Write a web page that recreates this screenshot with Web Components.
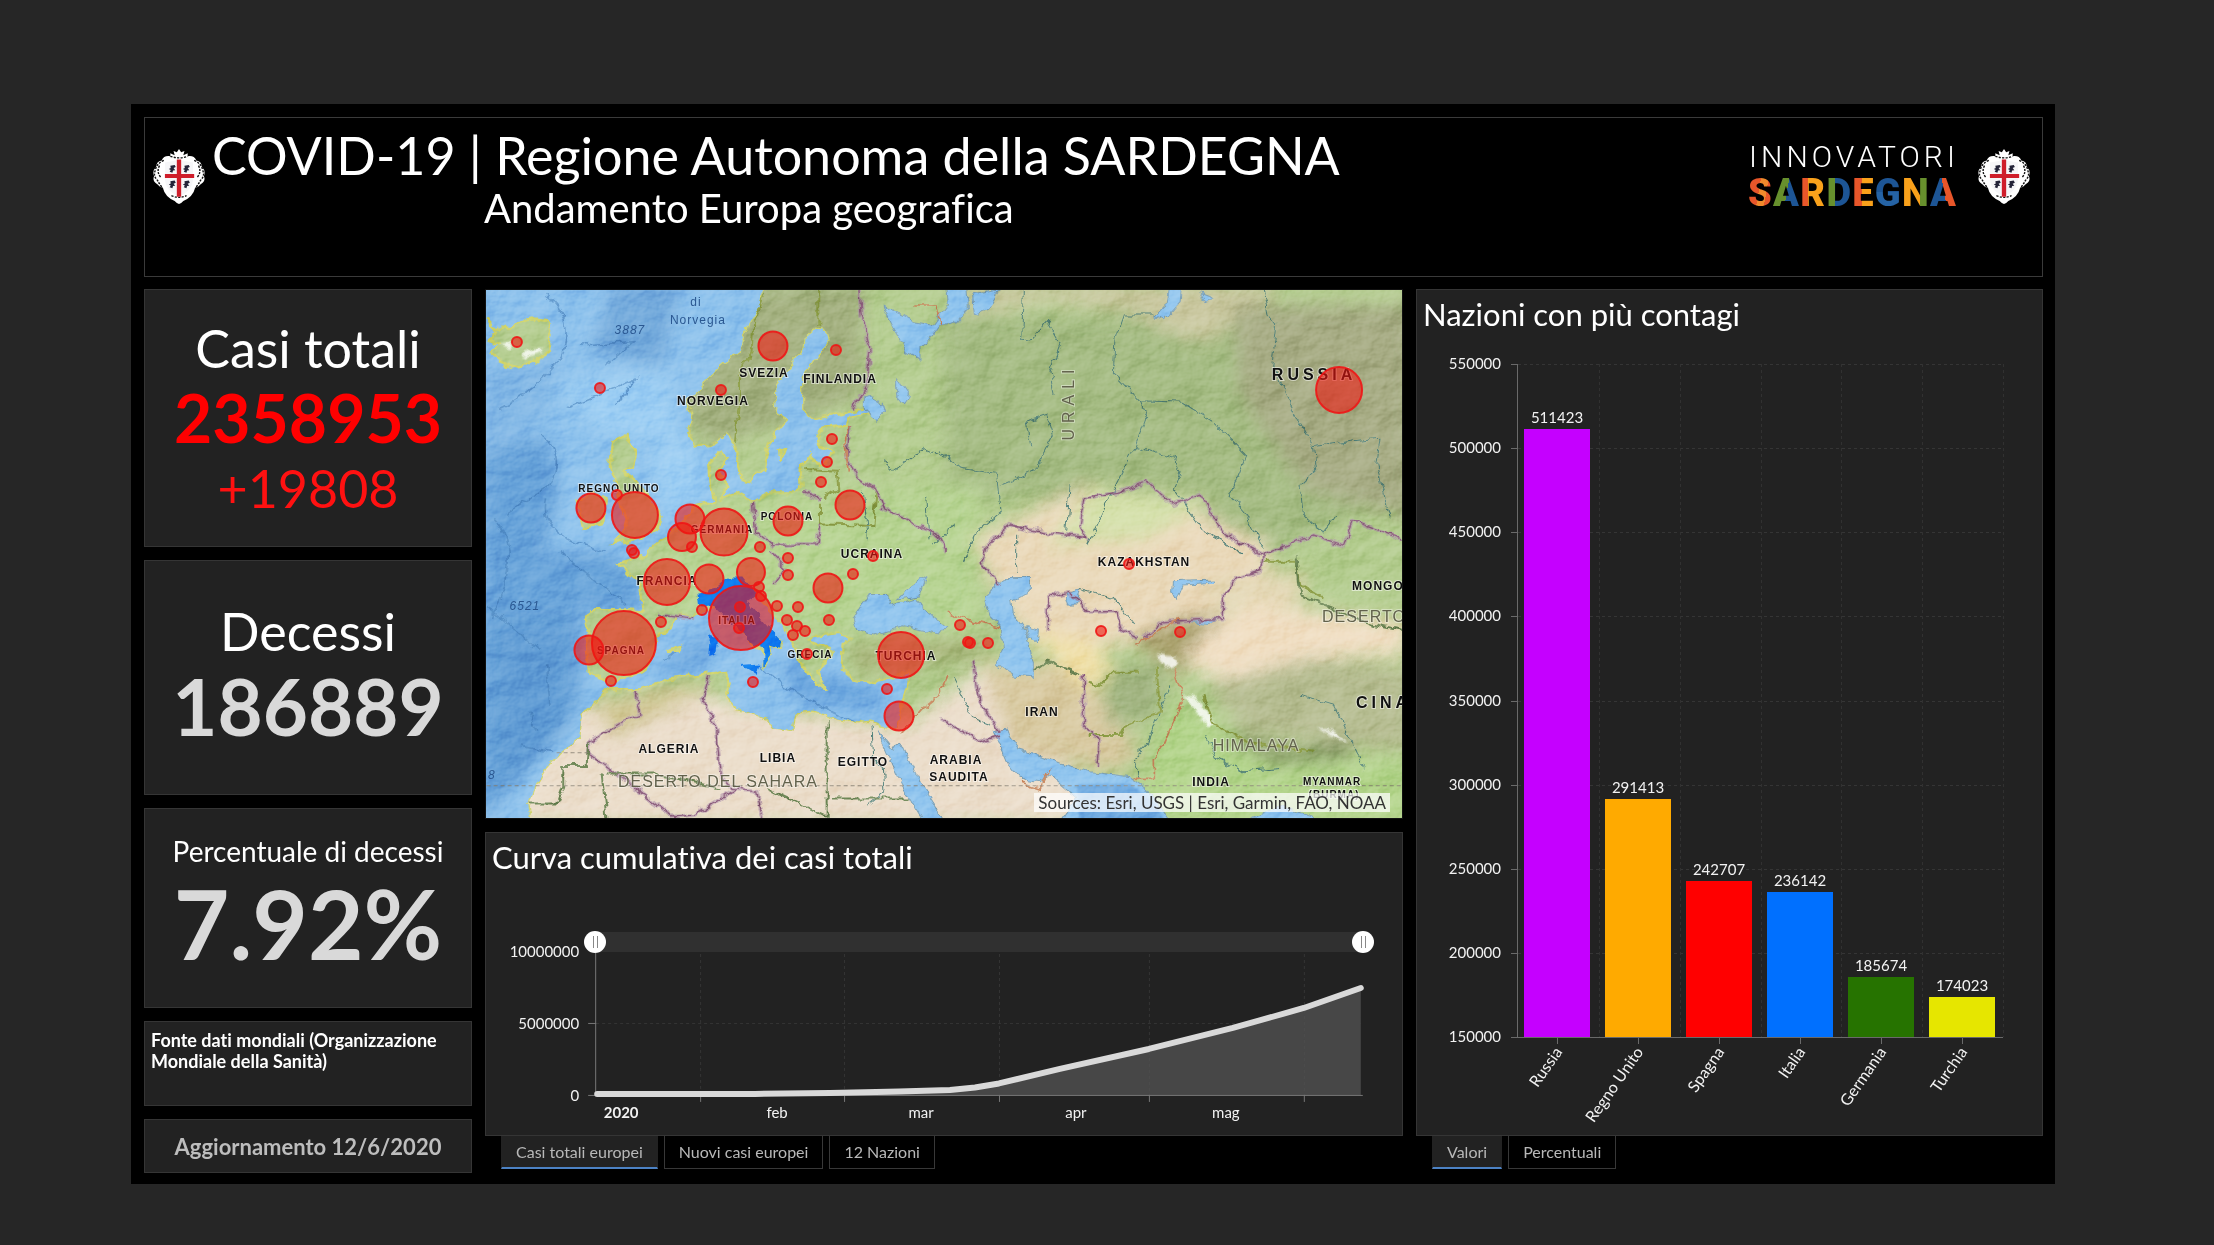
<!DOCTYPE html>
<html lang="it">
<head>
<meta charset="utf-8">
<title>COVID-19 | Regione Autonoma della SARDEGNA</title>
<style>
html{background:#262626}
body{margin:0;box-sizing:border-box;min-height:100vh;padding:104px 159px 61px 131px;display:flex;background:#262626;color:#fff;font-family:Lato,"Liberation Sans",sans-serif;font-variant-ligatures:none}
covid-dashboard{flex:1}
</style>
</head>
<body>
<covid-dashboard></covid-dashboard>

<template id="t-dashboard">
<style>
:host{display:flex;flex-direction:column;gap:12px;box-sizing:border-box;background:#000;padding:13px 12px 11px 13px;min-width:0}
main{flex:1;display:grid;grid-template-columns:328fr 918fr 627fr;gap:13px;min-height:0}
.col{display:flex;flex-direction:column;min-width:0;min-height:0}
.side{gap:13px}
.s1{flex:256 1 0}.s2{flex:223 1 0}.s3{flex:184 1 0}.s4{flex:83 1 0}.s5{flex:52 1 0}
.s2{padding-bottom:10px}
.s3{padding-bottom:14px}
europe-map{flex:530 1 0;min-height:0;margin-bottom:13px}
.line{flex:303 1 0;min-height:0}
.bars{flex:1 1 0;min-height:0}
tab-strip{padding-bottom:4px}
.big{font-size:52px;line-height:66px;font-weight:400}
.red{color:#f00;font-weight:700;font-size:66px;line-height:74px}
.delta{color:#f11;font-size:52px;line-height:66px}
.grey{color:#d9d9d9;font-weight:700}
.n2{font-size:78px;line-height:84px}
.n3{font-size:96px;line-height:100px}
.mid{font-size:28px;line-height:44px}
.note{font-size:18px;line-height:21px;font-weight:700;padding:8px 6px;box-sizing:border-box;width:100%;height:100%}
.upd{font-size:22px;font-weight:700;color:#bdbdbd}
</style>
<dash-header></dash-header>
<main>
  <div class="col side">
    <stat-card class="s1"><div class="big">Casi totali</div><div class="red">2358953</div><div class="delta">+19808</div></stat-card>
    <stat-card class="s2"><div class="big">Decessi</div><div class="grey n2">186889</div></stat-card>
    <stat-card class="s3"><div class="mid">Percentuale di decessi</div><div class="grey n3">7.92%</div></stat-card>
    <stat-card class="s4" align="start"><div class="note">Fonte dati mondiali (Organizzazione Mondiale della Sanità)</div></stat-card>
    <stat-card class="s5"><div class="upd">Aggiornamento 12/6/2020</div></stat-card>
  </div>
  <div class="col">
    <europe-map></europe-map>
    <panel-card class="line"><span slot="title">Curva cumulativa dei casi totali</span><line-chart></line-chart></panel-card>
    <tab-strip tabs="Casi totali europei,Nuovi casi europei,12 Nazioni"></tab-strip>
  </div>
  <div class="col">
    <panel-card class="bars"><span slot="title">Nazioni con più contagi</span><bar-chart></bar-chart></panel-card>
    <tab-strip tabs="Valori,Percentuali"></tab-strip>
  </div>
</main>
</template>

<template id="t-header">
<style>
:host{display:flex;align-items:flex-start;box-sizing:border-box;min-height:160px;border:1px solid #3a3a3a;padding:7px 12px 0 8px}
coat-arms{margin-top:23px}
.titles{flex:1;padding-left:7px}
h1{margin:0;font-weight:400;font-size:52px;line-height:60px}
p{margin:0;padding-left:272px;font-size:40px;line-height:46px}
brand-mark{margin:15px 22px 0 0}
</style>
<coat-arms></coat-arms>
<div class="titles"><h1>COVID-19 | Regione Autonoma della SARDEGNA</h1><p>Andamento Europa geografica</p></div>
<brand-mark></brand-mark>
<coat-arms></coat-arms>
</template>

<template id="t-brand">
<style>
:host{display:flex;flex-direction:column;align-items:center;width:208px}
.top{font:300 30px/34px Roboto,sans-serif;letter-spacing:4px;margin-right:-4px}
.bot{display:flex;justify-content:space-between;width:100%;font:900 38px/38px Roboto,sans-serif}
.bot span{background:linear-gradient(var(--g));background-clip:text;-webkit-background-clip:text;color:transparent}
</style>
<div class="top">INNOVATORI</div>
<div class="bot">
<span style="--g:100deg,#e8562a 45%,#f08a2c 45% 70%,#e8562a 70%">S</span><span style="--g:100deg,#67902d 52%,#1d5595 52%">A</span><span style="--g:90deg,#e8562a 34%,#f9a11b 34%">R</span><span style="--g:90deg,#67902d 36%,#1d5595 36%">D</span><span style="--g:90deg,#e8562a 44%,#f9a11b 44%">E</span><span style="--g:180deg,#1d5595 48%,#2563a5 48%">G</span><span style="--g:90deg,#f9a11b 68%,#67902d 68%">N</span><span style="--g:80deg,#1d5595 54%,#e8562a 54%">A</span>
</div>
</template>

<template id="t-arms">
<style>:host{display:block;width:52px;height:56px}svg{display:block;width:100%;height:100%}</style>
<svg viewBox="2 0 48 54" preserveAspectRatio="none" role="img" aria-label="Stemma della Regione Sardegna">
<path d="M26 1l2 3 3-1-1 4 4-2 0 3q6-1 8 4 5 1 5 6 4 4 2 9 2 5-3 8-2 3-5 3-2 9-11 13l-2 2-2 1-2-1-2-2q-9-4-11-13-3 0-5-3-5-3-3-8-2-5 2-9 0-5 5-6 2-5 8-4l0-3 4 2-1-4 3 1z" fill="#fff"/>
<g fill="none" stroke="#111" stroke-width="1.3" stroke-dasharray="2 1.2"><path d="M12 12q-7 3-8 10 -2 5 2 9 2 4 5 8M40 12q7 3 8 10 2 5-2 9-2 4-5 8"/><path d="M8 17q-3 6 1 11M44 17q3 6-1 11M18 8q8 3 16 0M19 46q7 3 14 0"/></g>
<path d="M13 14q7-1 13-3 6 2 13 3v15q0 12-13 18-13-6-13-18z" fill="#f6f6f8"/>
<path d="M24 11h4v36h-4zM13 25h27v4h-27z" fill="#cf1d2a"/>
<path fill="#232338" d="M18 17l4-.6 1 2-2 1 1.500 2-2 .3-.6 2.200-2.500-1 1-1.800-1.800-.8 1.800-1zM31 17l4-.6 1 2-2 1 1.500 2-2 .3-.6 2.200-2.500-1 1-1.800-1.800-.8 1.800-1zM18 32l4-.6 1 2-2 1 1.500 2-2 .3-.6 2.200-2.500-1 1-1.800-1.800-.8 1.800-1zM31 32l4-.6 1 2-2 1 1.500 2-2 .3-.6 2.200-2.500-1 1-1.800-1.800-.8 1.800-1z"/>
</svg>
</template>

<template id="t-stat">
<style>
:host{display:flex;flex-direction:column;align-items:center;justify-content:center;text-align:center;box-sizing:border-box;background:#222;border:1px solid #353535;min-height:0}
:host([align=start]){text-align:left;justify-content:flex-start}
</style><slot></slot>
</template>

<template id="t-panel">
<style>
:host{display:flex;flex-direction:column;box-sizing:border-box;background:#222;border:1px solid #353535}
h2{margin:0;padding:5px 6px 0;font-weight:400;font-size:31px;line-height:38px}
.body{flex:1;display:flex;min-height:0}
::slotted(line-chart),::slotted(bar-chart){flex:1;min-width:0}
</style><h2><slot name="title"></slot></h2><div class="body"><slot></slot></div>
</template>

<template id="t-tabs">
<style>
:host{display:flex;gap:6px;padding-left:16px}
button{box-sizing:border-box;height:33px;padding:0 14px;margin:0;border:1px solid #383838;border-top:0;background:#000;color:#b8b8b8;font:400 16px/28px Lato,sans-serif}
button[aria-selected=true]{background:#222;border-color:#222;border-bottom:2px solid #4c82c4}
</style>
</template>

<template id="t-line">
<style>
:host{display:flex;flex-direction:column}
.scrub{display:grid;align-items:center;margin:55px 28px 0 98px;height:22px}
.scrub::before{content:"";grid-area:1/1;height:20px;margin:0 11px;background:#303030}
input{grid-area:1/1;-webkit-appearance:none;appearance:none;width:100%;height:22px;margin:0;background:none;pointer-events:none}
input::-webkit-slider-thumb{-webkit-appearance:none;pointer-events:auto;width:22px;height:22px;border:0;border-radius:50%;background:linear-gradient(#888,#888) 9px 5px/1px 12px no-repeat,linear-gradient(#888,#888) 13px 5px/1px 12px no-repeat,#fff}
svg{flex:1 1 0;min-height:0;width:100%;overflow:visible;display:block}
text{fill:#f2f2f2;font-size:15px}
.e{text-anchor:end}.m{text-anchor:middle}
</style>
<div class="scrub"><input type="range" min="0" max="100" value="0" aria-label="Inizio periodo"><input type="range" min="0" max="100" value="100" aria-label="Fine periodo"></div>
<svg viewBox="486 953 916 182" role="img" aria-label="Curva cumulativa">
<g stroke="#353535" stroke-dasharray="3 3"><path d="M700.500 954V1095M844.500 954V1095M999.500 954V1095M1149.500 954V1095M1304.500 954V1095M596 1023.500H1362"/></g>
<path d="M595 1094H755L830 1093 899 1091.500 950 1090 975 1087.500 999 1083.500 1060 1069 1149 1049 1233 1028 1304 1008 1361 988V1095H595z" fill="#474747"/>
<g stroke="#4c4c4c" stroke-dasharray="3 3"><path d="M1149.500 1052V1095M1304.500 1010V1095"/></g>
<path d="M595.500 953V1095M588 1023.500h8M588 1095.500H1363M700.500 1095v7M844.500 1095v7M999.500 1095v7M1149.500 1095v7M1304.500 1095v7" stroke="#777" fill="none"/>
<path d="M597 1094H755L830 1093 899 1091.500 950 1090 975 1087.500 999 1083.500 1060 1069 1149 1049 1233 1028 1304 1008 1361 988" fill="none" stroke="#d9d9d9" stroke-width="6" stroke-linecap="round" stroke-linejoin="round"/>
<text class="e" x="579" y="957">10000000</text><text class="e" x="579" y="1029">5000000</text><text class="e" x="579" y="1101">0</text>
<g class="m"><text x="621" y="1118" font-weight="700">2020</text><text x="777" y="1118">feb</text><text x="921" y="1118">mar</text><text x="1076" y="1118">apr</text><text x="1226" y="1118">mag</text></g>
</svg>
</template>

<template id="t-bar">
<style>
:host{display:flex}
svg{width:100%;height:100%;display:block}
text{fill:#f2f2f2;font-size:15px}
.name{font-size:16px}
</style>
<svg viewBox="1417 333 625 802" role="img" aria-label="Nazioni con più contagi"></svg>
</template>

<template id="t-map">
<style>
:host{display:block;position:relative;overflow:hidden;background:#86bbea;border:1px solid #111;box-sizing:border-box}
svg{display:block;width:100%;height:100%}
.credit{position:absolute;right:12px;bottom:6px;padding:0 4px;background:rgba(255,255,255,.72);color:#333;font-size:17px;line-height:19px}
.l{font:700 12px "Liberation Sans",sans-serif;letter-spacing:1px;text-anchor:middle;fill:#111;paint-order:stroke;stroke:#ffffff88;stroke-width:2px}
.s{font-size:10px}.r{font-size:16px;letter-spacing:4px}
.g{font:400 16px "Liberation Sans",sans-serif;letter-spacing:1px;text-anchor:middle;fill:#62624c;paint-order:stroke;stroke:#ffffff66;stroke-width:2px}
.w{font:400 12px "Liberation Sans",sans-serif;letter-spacing:1px;text-anchor:middle;fill:#2a5791}
.i{font-style:italic}
.u{letter-spacing:6px}
.st{text-anchor:start}
</style>
<svg viewBox="0 0 916 528" preserveAspectRatio="xMidYMid slice" role="img" aria-label="Mappa dei contagi in Europa">
<defs>
<filter id="soft" x="-20%" y="-20%" width="140%" height="140%"><feGaussianBlur stdDeviation="26"/></filter>
<filter id="soft2" x="-20%" y="-20%" width="140%" height="140%"><feGaussianBlur stdDeviation="3"/></filter>
<filter id="rough" x="0" y="0" width="2800" height="1640" filterUnits="userSpaceOnUse"><feTurbulence type="fractalNoise" baseFrequency=".03" numOctaves="3" seed="4" result="n"/><feDisplacementMap in="SourceGraphic" in2="n" scale="26" xChannelSelector="R" yChannelSelector="G"/></filter>
<filter id="relief" x="0" y="0" width="100%" height="100%" color-interpolation-filters="sRGB"><feTurbulence type="fractalNoise" baseFrequency=".02 .026" numOctaves="5" seed="11" result="t"/><feDiffuseLighting in="t" surfaceScale="7" lighting-color="#fff"><feDistantLight azimuth="225" elevation="34"/></feDiffuseLighting></filter>
<path id="land" d="M850 0L845 60 805 120 780 200 720 250 670 300 625 345 640 400 625 440 650 488 700 475 745 440 765 480 775 530 785 585 812 592 825 560 850 555 862 500 880 450 915 410 885 370 890 300 930 240 970 190 975 150 1000 130 1040 135 1050 165 1000 230 970 280 970 375 1000 402 1090 385 1170 365 1165 385 1110 395 1100 420 1030 425 1015 450 1020 480 1060 500 1040 530 1015 545 990 505 962 545 965 605 945 625 870 625 820 650 770 625 720 640 745 600 720 560 740 515 720 505 685 540 690 600 704 650 640 665 600 720 560 755 510 795 500 812 415 835 440 865 482 885 490 950 480 978 430 975 330 975 315 1000 330 1050 318 1100 328 1165 370 1180 400 1195 440 1175 490 1160 520 1110 530 1060 575 1030 580 1008 600 985 640 995 690 970 730 960 755 1000 780 1040 830 1080 855 1115 850 1145 875 1110 870 1075 900 1085 905 1070 860 1035 820 990 790 945 830 930 870 970 910 1020 930 1060 950 1095 960 1130 1000 1190 1035 1215 1015 1160 1060 1100 990 1070 1000 1050 1080 1040 1115 1058 1088 1080 1085 1150 1120 1180 1170 1190 1230 1180 1285 1160 1280 1210 1265 1260 1250 1330 1200 1325 1170 1310 1130 1315 1050 1300 1000 1280 950 1285 940 1340 880 1330 860 1300 770 1275 740 1235 752 1195 740 1160 690 1165 560 1180 480 1215 430 1215 380 1215 355 1250 310 1290 300 1360 240 1405 200 1450 165 1510 148 1560 160 1620H2800V0z
M20 100L50 130 90 132 110 112 160 100 200 105 215 150 205 200 160 235 110 247 60 230 30 205 60 180 30 165 45 140z
M400 470L440 450 450 480 470 500 460 540 430 560 470 590 510 640 545 690 530 740 470 760 400 775 430 740 440 700 420 660 410 600 390 540z
M290 650L340 620 378 640 370 710 310 728z M900 490L918 495 905 530z M560 1100L605 1080 600 1100z"/>
<clipPath id="lc"><use href="#land"/></clipPath>
</defs>
<g transform="scale(.33333) translate(-18 -15)">
<g filter="url(#soft)">
<rect width="2800" height="1620" fill="#8cc1ec"/>
<path d="M0 500L200 450 240 600 200 800 400 800 480 900 480 980 310 980 310 1200 280 1300 0 1620z" fill="#66a2d9"/>
<path d="M400 0H600L550 250 330 200z" fill="#72a9db"/><path d="M0 250L250 200 200 400 0 520z" fill="#80b6e5"/>
<path d="M20 1000L280 1000 250 1350 60 1500 20 1400z" fill="#5f9bd4"/>
<path d="M500 1170L700 1030 680 1140 560 1170zM900 1120L1200 1210 1200 1280 950 1250z" fill="#66a3dd"/>
<path d="M500 500L640 470 690 620 560 700zM220 300L560 250 600 480 360 440z" fill="#9bcdf3"/>
</g>
<g fill="none" stroke="#3f79b4" stroke-width="5" opacity=".5" filter="url(#rough)"><path d="M200 30Q280 90 250 200Q200 300 60 370M300 180L460 170 380 240M260 370L470 280 410 360M180 450Q260 500 210 600L80 690M40 700Q130 790 40 1000M200 640Q170 760 380 800M20 960L180 1100M240 800L440 960M200 1140L210 1260M150 1280l20 60M120 1380l100 20M550 1130l60-50M840 1140Q900 1210 1120 1310M940 1080Q1010 1190 1040 1220"/></g>
<g filter="url(#rough)"><use href="#land" fill="#b3cc8e" stroke="#cfd36a" stroke-width="7"/></g>
<g filter="url(#rough)"><g clip-path="url(#lc)">
<g filter="url(#soft)">
<path d="M1380 90H2800V620L2400 790 1900 680 1700 640 1400 640z" fill="#a4bb82"/>
<path d="M1440 0H2400L2350 60 2180 170 2080 150 1950 80 1700 50 1460 90z" fill="#c9c79f"/>
<path d="M2260 60H2800V700L2480 620 2280 330z" fill="#a6ab83"/>
<path d="M600 0H1150V330L980 400 700 480 620 420z" fill="#a3b07f"/>
<path d="M500 800L760 640 1100 620 1500 600 1500 1050 600 1020z" fill="#b6d391"/>
<path d="M1480 760L1820 600 2060 640 2370 780 2360 900 2200 1000 1980 1080 1650 1080 1560 950z" fill="#ead9ba"/>
<path d="M1850 600L2200 650 2000 760 1700 780z" fill="#d3dfa8"/>
<path d="M100 1300L600 1200 780 1260 1280 1320 1500 1150 1640 1340 1950 1620H100z" fill="#ebddca"/>
<path d="M1500 1130L1800 1140 1980 1400 1900 1460 1600 1400z" fill="#d8c9a0"/>
<path d="M1880 1150L2050 1130 2060 1300 1880 1320z" fill="#9fb27e"/>
<path d="M2080 1080L2300 950 2780 1010 2780 1110 2500 1120 2250 1190 2130 1150z" fill="#f0dec2"/>
<path d="M2150 880L2480 860 2460 960 2200 960z" fill="#e3d7b4"/>
<path d="M1960 1060L2080 1000 2240 990 2130 1090 2100 1180 2020 1110z" fill="#a9a06c"/>
<path d="M2180 1200L2500 1120 2800 1150V1400L2300 1350z" fill="#b5bc90"/>
<path d="M2060 1240L2200 1300 2400 1430 2800 1420V1620H1960z" fill="#b3d48b"/>
<path d="M2200 1330L2420 1400 2620 1370 2600 1420 2380 1440z" fill="#7d8d5c"/>
<path d="M1640 1030L1860 1080 1900 1170 1800 1210z" fill="#f0e0a8"/>
<path d="M340 1260L700 1190 640 1240 400 1360z" fill="#cfc590"/>
<path d="M1110 1080L1420 1060 1560 1060 1480 1120 1130 1170z" fill="#a9b67c"/>
</g>
<g fill="#fff" filter="url(#soft2)" opacity=".8"><path d="M2030 1105l50 10 15 22-40 14-10-20zM2110 1230l40 5 20 30-30-5zM2125 1240l60 40 20 40-20 0-40-40zM2510 1330l50 5 45 40-40-20zM60 180l30-5 10 20zM120 205l60-20 10 15-50 20z"/></g>
</g></g>
<g filter="url(#rough)" fill="#8fc4ee" stroke="#7ca0b5" stroke-width="3">
<path d="M1120 1000L1170 925 1215 925 1240 965 1300 945 1330 970 1400 1025 1380 1050 1270 1025 1180 1050 1130 1035zM1250 945L1280 915 1340 875 1320 935z"/>
<path d="M1530 915L1580 880 1645 880 1645 925 1595 945 1600 985 1630 1025 1640 1055 1660 1135 1660 1175 1600 1170 1550 1140 1570 1085 1560 1025 1530 995 1515 945zM1635 1025L1675 1035 1672 1070 1645 1060z"/>
<path d="M1540 1340L1580 1335 1620 1395 1710 1425 1830 1460 1950 1475 2000 1510 2080 1620H1730L1790 1540 1710 1470 1680 1490 1620 1480 1580 1430z"/>
<path d="M1195 1340L1240 1395 1258 1370 1300 1455 1340 1525 1400 1620H1340L1300 1555 1250 1465z"/>
<path d="M1205 60L1250 85 1300 110 1360 120 1405 60 1400 0 1460 0 1465 70 1430 110 1380 120 1350 160 1320 180 1320 225 1280 200 1240 130zM1475 30L1560 15 1530 70 1480 90z"/>
<path d="M2070 0H2105L2100 50 2050 105 2025 95 2060 60zM2160 25l40 15-25 10zM1150 335L1180 330 1215 380 1190 405 1150 370zM1250 280L1285 330 1275 360 1250 330zM2080 890L2200 885 2200 895 2110 900 2090 945 2078 920zM1755 925L1800 915 1790 960 1765 960zM2310 1600L2400 1560 2500 1590V1620zM2130 1010l80-10-20 15z"/>
</g>
<path fill="#66a3dd" filter="url(#soft2)" d="M1790 1500L1950 1495 2030 1560 2060 1620H1800z" opacity=".8"/>
<g filter="url(#rough)" fill="none">
<g stroke="#4f7f78" stroke-width="3"><path d="M1630 15L1625 165 1660 160 1700 110 1740 180 1710 260 1725 330M1360 780L1400 740 1430 720M1380 500L1440 550 1550 565 1560 680 1490 740 1450 830M1560 600L1660 560 1720 450 1700 390 1640 410 1655 480M2020 90L1930 90 1905 160 1900 265 1980 350 2000 400 1970 480 1900 620 1870 680 1820 780M1980 350L2110 355 2200 410 2300 510 2250 630 2300 690 2350 790M1970 485L2080 520 2100 560 2080 610 2170 740 2280 800M2350 15L2365 90 2390 120 2375 240 2420 340 2500 485 2510 550 2460 600 2470 690 2500 720 2530 740 2570 690M2500 485L2640 465 2700 460 2690 540 2730 700M1770 600L1760 740M1610 740V860M1800 910L1900 940 1960 1020M2070 1200L2000 1380 1960 1420 1980 1480M2460 1230L2560 1260 2630 1400 2650 1450M2180 1350L2210 1420 2290 1460 2400 1450M1150 620L1165 760M1210 530L1240 560 1330 490 1400 520M1340 640L1350 760M1170 1320L1175 1420 1210 1450 1215 1520 1165 1560M1420 1180L1480 1300 1530 1320"/></g>
<g stroke="#8b9c45" stroke-width="6"><path d="M855 30L820 110 815 200 780 250 780 330 765 470M1015 0V130M1130 570L1190 620 1180 720 1020 715 1020 650M970 555L1070 560 1075 610 1030 640M1820 1190L1860 1200 1900 1160 1980 1160M2030 1150L2040 1280 1930 1330 1920 1350 1820 1350M2170 1230L2200 1320 2300 1370 2500 1400M2340 830L2450 830 2460 900 2530 940"/></g>
<g stroke="#a98aa8" stroke-width="12" opacity=".55"><path id="b1" d="M1135 0L1145 100 1170 190 1160 300 1120 370M1110 420L1100 520 1130 570 1190 620 1210 670 1370 750 1400 800M1505 830L1520 780 1590 720 1700 745 1820 760 1800 720 1815 640 1920 620 2000 590 2080 660 2160 630 2230 745 2330 800 2350 810M2350 810L2500 750 2590 780 2620 710 2780 770M2350 810L2340 860 2270 880 2230 930 2230 1000 2050 1010 1990 1060M820 650L830 740 880 780 960 780 1010 780 1020 715M1020 640L970 620M870 800L920 850 880 900M1705 1040V940L1760 920 1830 980 1910 980 1930 1040 1970 1060M465 1220L480 1290 430 1310 325 1375V1405L580 1595 640 1590 770 1510M690 1170L670 1240 710 1330 720 1460 750 1510 830 1520 850 1600M530 985L640 1000M1500 830L1560 900M1480 1130L1500 1250 1560 1340M1380 1300L1500 1370 1560 1350M1810 1170L1810 1320 1860 1370 1850 1440"/></g>
<g stroke="#8c5c7c" stroke-width="4"><use href="#b1"/></g>
<g stroke="#c7855c" stroke-width="5"><path d="M1405 1170L1380 1230 1330 1270 1260 1350M1970 1080L2080 1010 2100 1000M2080 1150L2110 1240 2050 1380 2020 1420 2020 1480 1960 1480M1620 1490L1680 1510 1710 1450M1300 60L1370 60 1390 120M1400 985L1560 1030M1110 420L1095 470 1105 560"/></g>
<g stroke="#6e8757" stroke-width="6"><path d="M325 1375L320 1440H250V1500L230 1555H150M380 1465H520L720 1510M365 1465L380 1600M860 1510L1040 1595V1305M1050 1540H1290M2450 820L2460 930 2560 970 2680 1020 2780 1040M1660 1160L1700 1130 1800 1170"/></g>
</g>
<g filter="url(#rough)" fill="#1177ef"><path d="M655 925L700 915 740 880 790 880 830 930 800 950 850 1010 905 1070 900 1085 870 1075 875 1110 850 1145 850 1085 800 1060 740 1000 700 960 660 965zM690 1050L715 1060 710 1100 685 1110zM780 1140L838 1135 830 1170z"/></g>
<path stroke="#8a8478" stroke-width="2.500" stroke-dasharray="12 9" d="M20 1502H2780M230 1403H325"/>
</g>
<rect width="916" height="528" filter="url(#relief)" style="mix-blend-mode:soft-light" opacity=".4"/>
<g id="labels">
<text class="w" x="210" y="16">di</text><text class="w" x="212" y="34">Norvegia</text><text class="w i" x="144" y="44">3887</text><text class="w i" x="39" y="320">6521</text><text class="w i" x="6" y="489">8</text>
<text class="l" x="227" y="115">NORVEGIA</text><text class="l" x="278" y="87">SVEZIA</text><text class="l" x="354" y="93">FINLANDIA</text><text class="l s" x="133" y="202">REGNO UNITO</text><text class="l s" x="236" y="243">GERMANIA</text><text class="l s" x="301" y="230">POLONIA</text><text class="l" x="386" y="268">UCRAINA</text><text class="l" x="181" y="295">FRANCIA</text><text class="l s" x="251" y="334">ITALIA</text><text class="l s" x="135" y="364">SPAGNA</text><text class="l s" x="324" y="368">GRECIA</text><text class="l" x="420" y="370">TURCHIA</text><text class="l" x="183" y="463">ALGERIA</text><text class="l" x="292" y="472">LIBIA</text><text class="l" x="377" y="476">EGITTO</text><text class="l" x="470" y="474">ARABIA</text><text class="l" x="473" y="491">SAUDITA</text><text class="l" x="556" y="426">IRAN</text><text class="l" x="658" y="276">KAZAKHSTAN</text><text class="l st" x="866" y="300">MONGO</text><text class="l st r" x="870" y="418">CINA</text><text class="l" x="725" y="496">INDIA</text><text class="l s" x="846" y="495">MYANMAR</text><text class="l s" x="848" y="508">(BURMA)</text><text class="l r" x="828" y="90">RUSSIA</text>
<text class="g st" x="836" y="332">DESERTO</text><text class="g" x="770" y="461">HIMALAYA</text><text class="g" x="232" y="497">DESERTO DEL SAHARA</text><text class="g u" transform="translate(588 112) rotate(-90)">URALI</text>
</g>
<g id="pins" fill="#f0140e" fill-opacity=".58" stroke="#ee1616" stroke-opacity=".9"></g>
</svg>
<div class="credit">Sources: Esri, USGS | Esri, Garmin, FAO, NOAA</div>
</template>

<script>
const SVG = 'http://www.w3.org/2000/svg';
const base = id => class extends HTMLElement {
  constructor() {
    super();
    this.attachShadow({ mode: 'open' }).append(document.getElementById(id).content.cloneNode(true));
  }
};
const el = (name, attrs, text) => {
  const n = document.createElementNS(SVG, name);
  for (const k in attrs) n.setAttribute(k, attrs[k]);
  if (text !== undefined) n.textContent = text;
  return n;
};

customElements.define('coat-arms', class extends base('t-arms') {});
customElements.define('brand-mark', class extends base('t-brand') {});
customElements.define('dash-header', class extends base('t-header') {});
customElements.define('stat-card', class extends base('t-stat') {});
customElements.define('panel-card', class extends base('t-panel') {});
customElements.define('line-chart', class extends base('t-line') {});

customElements.define('tab-strip', class extends base('t-tabs') {
  connectedCallback() {
    this.setAttribute('role', 'tablist');
    this.getAttribute('tabs').split(',').forEach((label, i) => {
      const b = document.createElement('button');
      b.type = 'button';
      b.setAttribute('role', 'tab');
      b.setAttribute('aria-selected', i === 0);
      b.textContent = label;
      b.onclick = () => this.shadowRoot.querySelectorAll('button').forEach(o => o.setAttribute('aria-selected', o === b));
      this.shadowRoot.append(b);
    });
  }
});

customElements.define('bar-chart', class extends base('t-bar') {
  connectedCallback() {
    const svg = this.shadowRoot.querySelector('svg');
    const rows = [['Russia', 511423, '#c500ff'], ['Regno Unito', 291413, '#ffaa00'], ['Spagna', 242707, '#ff0000'],
      ['Italia', 236142, '#0070ff'], ['Germania', 185674, '#267300'], ['Turchia', 174023, '#e6e600']];
    const x0 = 1518, x1 = 2003, y0 = 1037, y1 = 364, step = (x1 - x0) / 6;
    const y = v => y0 - (v - 150000) / 400000 * (y0 - y1);
    for (let v = 150000; v <= 550000; v += 50000) {
      const py = Math.round(y(v)) + .5;
      svg.append(el('path', { d: `M${x0} ${py}H${x1}`, stroke: '#353535', 'stroke-dasharray': '3 3' }));
      svg.append(el('path', { d: `M${x0 - 7} ${py}h7`, stroke: '#6a6a6a' }));
      svg.append(el('text', { x: 1501, y: Math.round(y(v)) + 5, 'text-anchor': 'end' }, v));
    }
    rows.forEach(([name, v, fill], i) => {
      const cx = x0 + step * (i + .5), gx = Math.round(x0 + step * (i + 1)) + .5;
      svg.append(el('path', { d: `M${gx} ${y1}V${y0}`, stroke: '#313131', 'stroke-dasharray': '3 3' }));
      svg.append(el('rect', { x: Math.round(cx - 34), y: Math.round(y(v)), width: 66, height: y0 - Math.round(y(v)), fill }));
      svg.append(el('path', { d: `M${Math.round(cx) - .5} ${y0}v7`, stroke: '#6a6a6a' }));
      svg.append(el('text', { x: Math.round(cx) - 1, y: Math.round(y(v)) - 6, 'text-anchor': 'middle' }, v));
      svg.append(el('text', { class: 'name', transform: `translate(${Math.round(cx) + 5} 1052) rotate(-55)`, 'text-anchor': 'end' }, name));
    });
    svg.append(el('path', { d: `M${x0 - .5} ${y1}V${y0 + .5}H${x1}`, fill: 'none', stroke: '#6a6a6a' }));
  }
});

customElements.define('europe-map', class extends base('t-map') {
  connectedCallback() {
    const pins = [[31,52],[114,98],[287,56,14.500],[350,60],[235,100],[346,149],[341,172],[335,192],[364,215,14.500],[235,185],
      [105,218,14.500],[149,225,23],[131,205],[302,231,14.500],[204,229,14.500],[238,242,23.500],[196,247,14],[206,257],[274,257],
      [146,260],[148,263],[302,268],[302,285],[387,266],[367,284],[342,298,14.500],[181,292,23],[223,289,14.500],[265,282,14],
      [255,328,32],[254,317],[253,338],[216,320],[175,332],[138,353,32],[103,360,14.500],[125,391],[267,392],[275,306],[273,297],
      [291,316],[312,317],[301,330],[311,336],[319,341],[307,345],[343,330],[321,364],[415,365,23],[401,399],[413,426,14.500],
      [474,335],[484,353],[482,352],[502,353],[615,341],[694,342],[643,274],[853,100,23]];
    const g = this.shadowRoot.querySelector('#pins');
    pins.forEach(([cx, cy, r = 5]) => g.append(el('circle', { cx, cy, r, 'stroke-width': 2 })));
  }
});

customElements.define('covid-dashboard', class extends base('t-dashboard') {});
</script>
</body>
</html>
